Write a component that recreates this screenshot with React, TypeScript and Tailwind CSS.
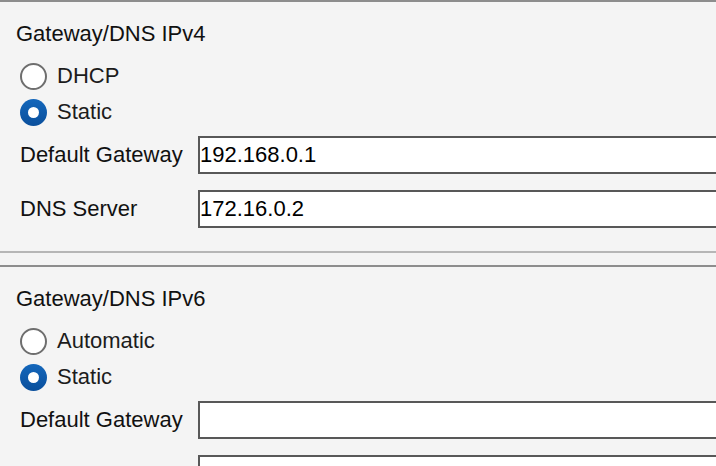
import { useState } from 'react';

interface RadioProps {
  label: string;
  checked: boolean;
  onSelect: () => void;
}

function Radio({ label, checked, onSelect }: RadioProps) {
  return (
    <button type="button" onClick={onSelect} className="flex h-9 items-center gap-[10px] pl-5 text-left">
      {checked ? (
        <span className="flex h-[27px] w-[27px] items-center justify-center rounded-full bg-linear-to-b from-[#1467bb] to-[#0a4f9c]">
          <span className="h-[11px] w-[11px] rounded-full bg-white" />
        </span>
      ) : (
        <span className="h-[27px] w-[27px] rounded-full border-2 border-[#6e6e6e] bg-white" />
      )}
      <span className="text-[22px] leading-[26px] text-[#1c1c1c]">{label}</span>
    </button>
  );
}

interface FieldProps {
  label: string;
  value: string;
}

function Field({ label, value }: FieldProps) {
  const [text, setText] = useState(value);
  return (
    <div className="flex h-[38px] items-center">
      <span className="w-[198px] shrink-0 whitespace-nowrap pl-5 text-[22px] leading-[26px] text-[#111]">{label}</span>
      <input
        value={text}
        onChange={(e) => setText(e.target.value)}
        className="-mr-6 h-[38px] min-w-0 flex-1 border-2 border-[#585858] bg-white px-0 text-[22px] text-black outline-none"
      />
    </div>
  );
}

interface SectionProps {
  title: string;
  options: [string, string];
  gateway: string;
  dns: string;
  className?: string;
}

function Section({ title, options, gateway, dns, className = '' }: SectionProps) {
  const [mode, setMode] = useState(1);
  return (
    <div className={`border-t-2 border-b-2 border-t-[#8d8d8d] border-b-[#b6b6b6] pt-[18px] pb-[23px] ${className}`}>
      <div className="flex h-7 items-center pl-4 text-[22px] leading-[26px] text-[#111]">{title}</div>
      <div className="mt-[10px] flex flex-col">
        {options.map((opt, i) => (
          <Radio key={opt} label={opt} checked={mode === i} onSelect={() => setMode(i)} />
        ))}
      </div>
      <div className="mt-[6px] flex flex-col gap-4">
        <Field label="Default Gateway" value={gateway} />
        <Field label="DNS Server" value={dns} />
      </div>
    </div>
  );
}

export default function App() {
  return (
    <div className="h-[466px] w-[716px] overflow-hidden bg-[#f4f4f4] font-['Liberation_Sans',Arial,sans-serif]">
      <Section title="Gateway/DNS IPv4" options={['DHCP', 'Static']} gateway="192.168.0.1" dns="172.16.0.2" />
      <Section
        title="Gateway/DNS IPv6"
        options={['Automatic', 'Static']}
        gateway=""
        dns=""
        className="mt-3"
      />
    </div>
  );
}
